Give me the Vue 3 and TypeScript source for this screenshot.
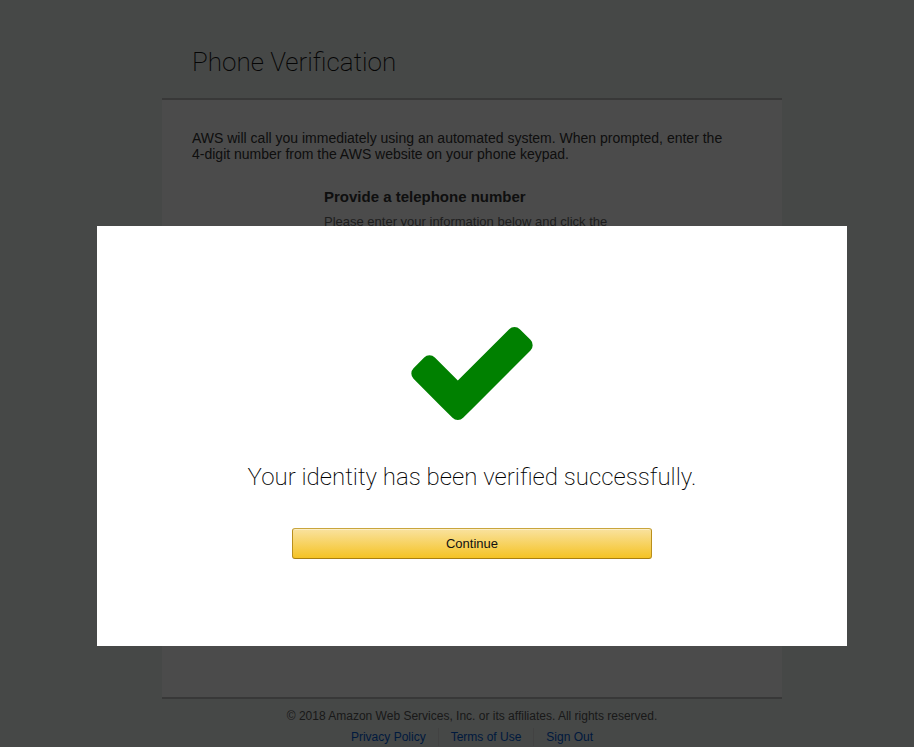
<script setup lang="ts">
import { ref } from 'vue'

interface FooterLink {
  label: string
  href: string
}

const verified = ref<boolean>(true)

const links: FooterLink[] = [
  { label: 'Privacy Policy', href: '#privacy' },
  { label: 'Terms of Use', href: '#terms' },
  { label: 'Sign Out', href: '#signout' },
]

function proceed(): void {
  verified.value = false
}
</script>

<template>
  <div class="page">
    <div class="column">
      <header class="heading">
        <h1>Phone Verification</h1>
      </header>
      <main class="panel">
        <p class="intro">
          AWS will call you immediately using an automated system. When prompted, enter the
          <span class="digits">4-digit</span> number from the AWS website on your phone keypad.
        </p>
        <section class="step">
          <h2>Provide a telephone number</h2>
          <p>Please enter your information below and click the</p>
        </section>
      </main>
      <footer class="footer">
        <p>© 2018 Amazon Web Services, Inc. or its affiliates. All rights reserved.</p>
        <nav class="links">
          <a v-for="link in links" :key="link.label" :href="link.href">{{ link.label }}</a>
        </nav>
      </footer>
    </div>
  </div>

  <div v-if="verified" class="overlay">
    <div class="dialog" role="dialog" aria-modal="true" aria-labelledby="dialog-title">
      <svg class="check" viewBox="121 334 1550 1188" aria-hidden="true">
        <path
          d="M1671 566q0 40-28 68l-724 724-136 136q-28 28-68 28t-68-28l-136-136-362-362q-28-28-28-68t28-68l136-136q28-28 68-28t68 28l294 295 656-657q28-28 68-28t68 28l136 136q28 28 28 68z"
        />
      </svg>
      <h2 id="dialog-title">Your identity has been verified successfully.</h2>
      <button type="button" class="continue" @click="proceed">Continue</button>
    </div>
  </div>
</template>

<style>
body {
  background: #eaf0ed;
}
</style>

<style scoped>
.page {
  box-sizing: border-box;
  min-height: 100vh;
  padding-left: 30px;
  background: #eaf0ed;
  color: #333;
  font-family: 'Liberation Sans', Arial, sans-serif;
}

h1,
h2,
p {
  margin: 0;
}

.column {
  max-width: 620px;
  margin: 0 auto;
}

.heading {
  padding: 44px 30px 18px;
}

.heading h1 {
  color: #111;
  font: 200 26px/36px Roboto, sans-serif;
}

.panel {
  min-height: 567px;
  padding-top: 30px;
  border-top: 2px solid #bbb;
  border-bottom: 2px solid #bbb;
  background: #fafafa;
}

.intro {
  padding: 0 30px;
  font-size: 14px;
  line-height: 16px;
}

.digits {
  white-space: nowrap;
}

.step {
  padding: 25px 30px 0 162px;
}

.step h2 {
  font-size: 15px;
  line-height: 20px;
}

.step p {
  padding-top: 6px;
  color: #666;
  font-size: 13px;
  line-height: 18px;
}

.footer {
  padding-top: 8px;
  color: #555;
  font-size: 12px;
  line-height: 18px;
  text-align: center;
}

.links {
  display: flex;
  justify-content: center;
  padding-top: 3px;
}

.links a {
  padding: 0 12px;
  color: #0058d0;
  text-decoration: none;
}

.links a + a {
  border-left: 1px solid #ddd;
}

.overlay {
  position: fixed;
  inset: 0;
  display: flex;
  align-items: flex-start;
  justify-content: center;
  padding: 226px 0 0 30px;
  background: rgba(0, 0, 0, 0.7);
  font-family: 'Liberation Sans', Arial, sans-serif;
}

.dialog {
  box-sizing: border-box;
  display: flex;
  flex-direction: column;
  align-items: center;
  width: 750px;
  min-height: 420px;
  padding: 101px 30px 80px;
  background: #fff;
}

.check {
  width: 122px;
  height: 93px;
  fill: #008000;
}

.dialog h2 {
  margin: 39px 0 33px;
  color: #000;
  font: 200 24px/36px Roboto, sans-serif;
}

.continue {
  width: 360px;
  height: 31px;
  padding: 0;
  border: 1px solid;
  border-color: #c9a53c #b98f1c #a87f10;
  border-radius: 3px;
  background: linear-gradient(#f9e29f, #f5c324);
  box-shadow: inset 0 1px 0 rgba(255, 255, 255, 0.4);
  color: #111;
  font: 13px/19px 'Liberation Sans', Arial, sans-serif;
  cursor: pointer;
}
</style>
